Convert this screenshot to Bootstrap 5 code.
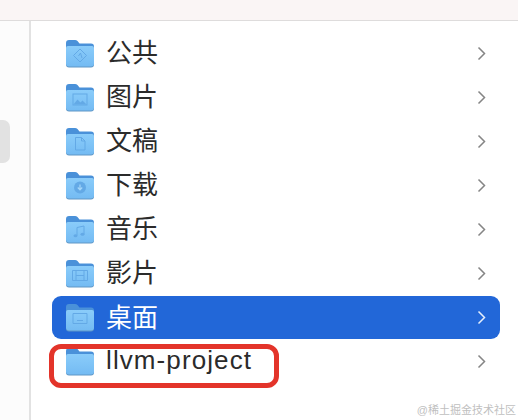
<!DOCTYPE html>
<html lang="zh">
<head>
    <meta charset="UTF-8">
    <title>Finder</title>
    <link rel="stylesheet" href="https://cdn.jsdelivr.net/npm/bootstrap@5.3.0/dist/css/bootstrap.min.css">
    <style>
        html, body { height: 420px; overflow: hidden; background: #fff; }
        body { position: relative; font-family: "Liberation Sans", "Noto Sans CJK SC", sans-serif; color: #2b2b2b; }
        .top-strip { height: 21px; background: #faf5f5; border-bottom: 1px solid #dedcdc; }
        .main-area { height: 399px; }
        .side-strip { width: 31px; background: #fcfcfc; border-right: 2px solid #e2e2e2; padding-top: 99px; }
        .side-tab { width: 10px; height: 43px; background: #e2e2e2; border-radius: 0 7px 7px 0; }
        .file-list { padding: 10px 18px 0 21px; }
        .file-row { height: 44px; padding: 0 14px 0 13px; border-radius: 9px; }
        .file-row.picked { height: 43px; margin-top: 1px; background: #2267d8; color: #fff; }
        .file-name { margin-left: 11px; font-size: 26px; line-height: 1; }
        .file-name.latin { letter-spacing: 1.1px; margin-top: -3px; }
        .folder-icon { width: 30px; height: 29px; }
        .row-arrow { width: 9px; height: 15px; color: #858585; }
        .picked .row-arrow { color: #e6effc; }
        .red-mark { position: absolute; left: 49px; top: 344px; width: 230px; height: 44px; border: 5px solid #e3342a; border-radius: 12px; }
        .site-mark { position: absolute; right: 2px; top: 402px; font-size: 11px; line-height: 16px; color: #bfbfbf; white-space: nowrap; }
        .glyph { fill: none; stroke: #63a9e6; stroke-width: 1; }
        .glyph-fill { fill: #63a9e6; }
    </style>
</head>
<body>

    <svg width="0" height="0" class="d-block position-absolute">
        <defs>
            <linearGradient id="bodyFill" x1="0" y1="0" x2="0" y2="1">
                <stop offset="0" stop-color="#8accfa"/>
                <stop offset="1" stop-color="#74bbf3"/>
            </linearGradient>
            <symbol id="folder" viewBox="0 0 30 29">
                <path d="M1 4q0-3 3-3h6q1.500 0 2.500 1l2 2.500h11.500q3 0 3 3v6H1z" fill="#4a91d9"/>
                <path d="M1 9q0-2 2-2h24q2 0 2 2v16.500q0 3-3 3H4q-3 0-3-3z" fill="#6097c6"/>
                <path d="M1 9q0-2 2-2h24q2 0 2 2v15.500q0 3-3 3H4q-3 0-3-3z" fill="url(#bodyFill)"/>
            </symbol>
        </defs>
    </svg>

    <div class="top-strip"></div>

    <div class="main-area d-flex">
        <div class="side-strip flex-shrink-0">
            <div class="side-tab"></div>
        </div>
        <ul class="file-list list-unstyled flex-grow-1 mb-0">
            <li class="file-row d-flex align-items-center">
                <svg class="folder-icon" viewBox="0 0 30 29"><use href="#folder"/>
                    <path class="glyph" d="M15 10l6.500 6.500-6.500 6.500-6.500-6.500zM13.500 17l2-3M15.500 14l1.500 5"/>
                </svg>
                <span class="file-name">公共</span>
                <svg class="row-arrow ms-auto" viewBox="0 0 9 15"><path d="M1.500 1.500l6 6-6 6" fill="none" stroke="currentColor" stroke-width="1.500"/></svg>
            </li>
            <li class="file-row d-flex align-items-center">
                <svg class="folder-icon" viewBox="0 0 30 29"><use href="#folder"/>
                    <rect class="glyph" x="8" y="11" width="14" height="11"/>
                    <path class="glyph-fill" d="M8.500 21.500l4-5 3 3 2-2 4 4z"/>
                </svg>
                <span class="file-name">图片</span>
                <svg class="row-arrow ms-auto" viewBox="0 0 9 15"><path d="M1.500 1.500l6 6-6 6" fill="none" stroke="currentColor" stroke-width="1.500"/></svg>
            </li>
            <li class="file-row d-flex align-items-center">
                <svg class="folder-icon" viewBox="0 0 30 29"><use href="#folder"/>
                    <path class="glyph" d="M10.500 10.500h6l3.500 3.500v9h-9.500zM16.500 10.500v3.500h3.500"/>
                </svg>
                <span class="file-name">文稿</span>
                <svg class="row-arrow ms-auto" viewBox="0 0 9 15"><path d="M1.500 1.500l6 6-6 6" fill="none" stroke="currentColor" stroke-width="1.500"/></svg>
            </li>
            <li class="file-row d-flex align-items-center">
                <svg class="folder-icon" viewBox="0 0 30 29"><use href="#folder"/>
                    <circle class="glyph-fill" cx="15" cy="16.500" r="6"/>
                    <path d="M15 13.500v5M12.800 16.500l2.200 2.300 2.200-2.300" fill="none" stroke="#a5d7fa" stroke-width="1.200"/>
                </svg>
                <span class="file-name">下载</span>
                <svg class="row-arrow ms-auto" viewBox="0 0 9 15"><path d="M1.500 1.500l6 6-6 6" fill="none" stroke="currentColor" stroke-width="1.500"/></svg>
            </li>
            <li class="file-row d-flex align-items-center">
                <svg class="folder-icon" viewBox="0 0 30 29"><use href="#folder"/>
                    <path class="glyph" d="M12 20.500v-8l7-1.500v8"/>
                    <ellipse class="glyph-fill" cx="10.500" cy="20.700" rx="2" ry="1.500"/>
                    <ellipse class="glyph-fill" cx="17.500" cy="19.200" rx="2" ry="1.500"/>
                </svg>
                <span class="file-name">音乐</span>
                <svg class="row-arrow ms-auto" viewBox="0 0 9 15"><path d="M1.500 1.500l6 6-6 6" fill="none" stroke="currentColor" stroke-width="1.500"/></svg>
            </li>
            <li class="file-row d-flex align-items-center">
                <svg class="folder-icon" viewBox="0 0 30 29"><use href="#folder"/>
                    <path class="glyph" d="M7.500 11.500h15v10h-15zM11 11.500v10M19 11.500v10M11 16.500h8"/>
                </svg>
                <span class="file-name">影片</span>
                <svg class="row-arrow ms-auto" viewBox="0 0 9 15"><path d="M1.500 1.500l6 6-6 6" fill="none" stroke="currentColor" stroke-width="1.500"/></svg>
            </li>
            <li class="file-row picked d-flex align-items-center">
                <svg class="folder-icon" viewBox="0 0 30 29"><use href="#folder"/>
                    <path class="glyph" d="M8 10.500h14v10H8zM12 17.500h6"/>
                </svg>
                <span class="file-name">桌面</span>
                <svg class="row-arrow ms-auto" viewBox="0 0 9 15"><path d="M1.500 1.500l6 6-6 6" fill="none" stroke="currentColor" stroke-width="1.500"/></svg>
            </li>
            <li class="file-row d-flex align-items-center">
                <svg class="folder-icon" viewBox="0 0 30 29"><use href="#folder"/></svg>
                <span class="file-name latin">llvm-project</span>
                <svg class="row-arrow ms-auto" viewBox="0 0 9 15"><path d="M1.500 1.500l6 6-6 6" fill="none" stroke="currentColor" stroke-width="1.500"/></svg>
            </li>
        </ul>
    </div>

    <div class="red-mark"></div>
    <div class="site-mark">@稀土掘金技术社区</div>

</body>
</html>
